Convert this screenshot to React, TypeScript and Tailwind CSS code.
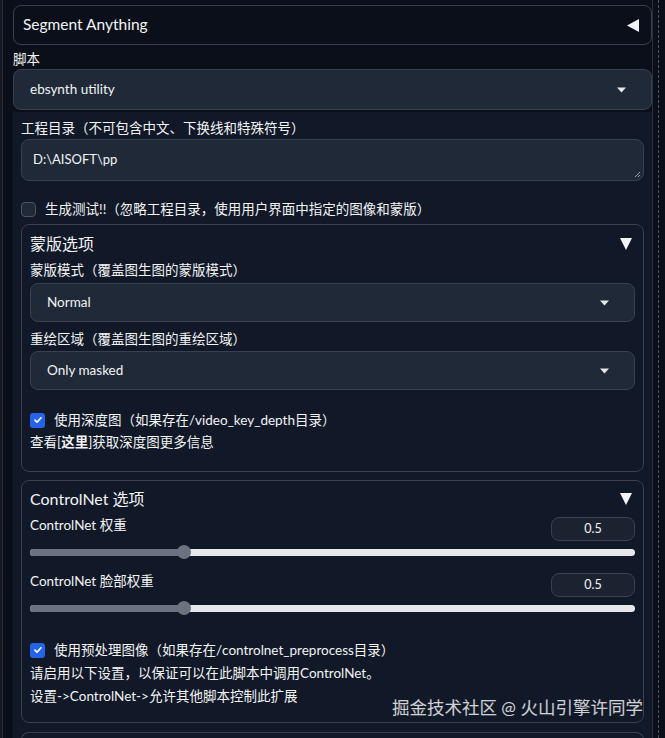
import React from 'react';

const font = "font-['Lato','Noto_Sans_CJK_SC',sans-serif]";

function Caret() {
    return (
        <svg width="9" height="6" viewBox="0 0 9 6">
            <path d="M0 0.5h9L4.5 5.5z" fill="#e5e7eb" />
        </svg>
    );
}

function TriDown() {
    return (
        <svg width="12" height="12" viewBox="0 0 12 12">
            <path d="M0 0h12L6 12z" fill="#f3f4f6" />
        </svg>
    );
}

function TriLeft() {
    return (
        <svg width="12" height="13" viewBox="0 0 12 13">
            <path d="M12 0v13L0 6.5z" fill="#f3f4f6" />
        </svg>
    );
}

function Select({ value, h = 'h-[39px]' }: { value: string; h?: string }) {
    return (
        <div className={`flex ${h} items-center justify-between rounded-lg border border-[#374151] bg-[#1f2937] pl-[16px] pr-[25px] text-[13.5px] text-gray-100`}>
            <span>{value}</span>
            <Caret />
        </div>
    );
}

function Check({ checked }: { checked: boolean }) {
    if (!checked) {
        return <div className="h-[15px] w-[15px] shrink-0 rounded-[4px] border border-[#4b5563] bg-[#1f2937]" />;
    }
    return (
        <div className="flex h-[15px] w-[15px] shrink-0 items-center justify-center rounded-[3px] bg-[#2563eb]">
            <svg width="10" height="10" viewBox="0 0 10 10">
                <path d="M2 5.2l2 2 4-4.4" stroke="#fff" strokeWidth="1.7" fill="none" strokeLinecap="round" strokeLinejoin="round" />
            </svg>
        </div>
    );
}

function Slider({ pct }: { pct: number }) {
    return (
        <div className="relative flex h-[16px] items-center">
            <div className="h-[7px] w-full overflow-hidden rounded-full bg-[#e5e7eb]">
                <div className="h-full bg-[#6b7280]" style={{ width: `${pct}%` }} />
            </div>
            <div
                className="absolute top-[1px] h-[14px] w-[14px] -translate-x-1/2 rounded-full bg-[#6b7280]"
                style={{ left: `${pct}%` }}
            />
        </div>
    );
}

function NumBox({ value }: { value: string }) {
    return (
        <div className="flex h-[24px] w-[84px] items-center justify-center rounded-lg border border-[#374151] bg-[#1b2230] text-[12.5px] text-gray-100">
            {value}
        </div>
    );
}

export default function App() {
    return (
        <div className={`relative flex h-[738px] w-[665px] overflow-hidden bg-[#0b0f19] text-gray-100 ${font}`}>
            {/* left edge */}
            <div className="w-[3px] shrink-0 border-r border-[#2b303b] bg-[#151820]" />

            <div className="w-[650px] shrink-0 border-r border-[#2a2f3a] pl-[10px] pt-[5px]">
                <div className="flex h-[40px] items-center justify-between rounded-lg border border-[#374151] bg-[#0b0f19] pl-[9px] pr-[12px]">
                    <span className="text-[15.5px]">Segment Anything</span>
                    <TriLeft />
                </div>

                <div className="mt-[5px] text-[13.5px] leading-[18px]">脚本</div>
                <div className="mt-[1px]">
                    <Select value="ebsynth utility" h="h-[41px]" />
                </div>

                <div className="mt-[2px] h-[640px] bg-[#111827] px-[8px] pt-[7px]">
                    <div className="text-[13.5px] leading-[18px]">工程目录（不可包含中文、下换线和特殊符号）</div>
                    <div className="relative mt-[2px] h-[42px] rounded-lg border border-[#374151] bg-[#1f2937] pl-[11px] pt-[10px] text-[13px] text-gray-100">
                        D:\AISOFT\pp
                        <svg className="absolute bottom-[2px] right-[2px]" width="8" height="8" viewBox="0 0 8 8">
                            <path d="M7 2L2 7M7 5L5 7" stroke="#9ca3af" strokeWidth="1" />
                        </svg>
                    </div>

                    <div className="mt-[19px] flex items-center gap-[9px] text-[13.5px] leading-[18px]">
                        <Check checked={false} />
                        <span>生成测试!!（忽略工程目录，使用用户界面中指定的图像和蒙版）</span>
                    </div>

                    {/* 蒙版选项 */}
                    <div className="mt-[6px] h-[248px] rounded-lg border border-[#374151] px-[8px] pt-[9px]">
                        <div className="flex items-center justify-between pr-[3px]">
                            <span className="text-[16px] leading-[20px]">蒙版选项</span>
                            <TriDown />
                        </div>
                        <div className="mt-[7px] text-[13.5px] leading-[18px]">蒙版模式（覆盖图生图的蒙版模式）</div>
                        <div className="mt-[4px]">
                            <Select value="Normal" />
                        </div>
                        <div className="mt-[8px] text-[13.5px] leading-[18px]">重绘区域（覆盖图生图的重绘区域）</div>
                        <div className="mt-[3px]">
                            <Select value="Only masked" />
                        </div>
                        <div className="mt-[21px] flex items-center gap-[9px] text-[13.5px] leading-[18px]">
                            <Check checked />
                            <span>使用深度图（如果存在/video_key_depth目录）</span>
                        </div>
                        <div className="mt-[4px] text-[13.5px] leading-[18px]">
                            查看[<b className="font-bold">这里</b>]获取深度图更多信息
                        </div>
                    </div>

                    {/* ControlNet 选项 */}
                    <div className="mt-[8px] h-[243px] rounded-lg border border-[#374151] px-[8px] pt-[8px]">
                        <div className="flex items-center justify-between pr-[3px]">
                            <span className="text-[16px] leading-[20px]">ControlNet 选项</span>
                            <TriDown />
                        </div>
                        <div className="mt-[8px] flex items-start justify-between">
                            <span className="mt-[-1px] text-[13.5px] leading-[18px]">ControlNet 权重</span>
                            <NumBox value="0.5" />
                        </div>
                        <div className="mt-[3px]">
                            <Slider pct={25.5} />
                        </div>
                        <div className="mt-[13px] flex items-start justify-between">
                            <span className="mt-[-1px] text-[13.5px] leading-[18px]">ControlNet 脸部权重</span>
                            <NumBox value="0.5" />
                        </div>
                        <div className="mt-[3px]">
                            <Slider pct={25.5} />
                        </div>
                        <div className="mt-[25px] flex items-center gap-[9px] text-[13.5px] leading-[18px]">
                            <Check checked />
                            <span>使用预处理图像（如果存在/controlnet_preprocess目录）</span>
                        </div>
                        <div className="mt-[5px] text-[13.5px] leading-[18px]">请启用以下设置，以保证可以在此脚本中调用ControlNet。</div>
                        <div className="mt-[5px] text-[13.5px] leading-[18px]">设置-&gt;ControlNet-&gt;允许其他脚本控制此扩展</div>
                    </div>

                    <div className="mt-[9px] h-[20px] rounded-t-lg border border-b-0 border-[#374151]" />
                </div>
            </div>

            {/* right gutter with dashed line */}
            <div className="ml-[5px] w-0 shrink-0 border-l border-dashed border-[#4b5563]" />

            <div className="absolute right-[22px] top-[696px] text-[17.5px] leading-[24px] text-white/80">
                掘金技术社区 @ 火山引擎许同学
            </div>
        </div>
    );
}
